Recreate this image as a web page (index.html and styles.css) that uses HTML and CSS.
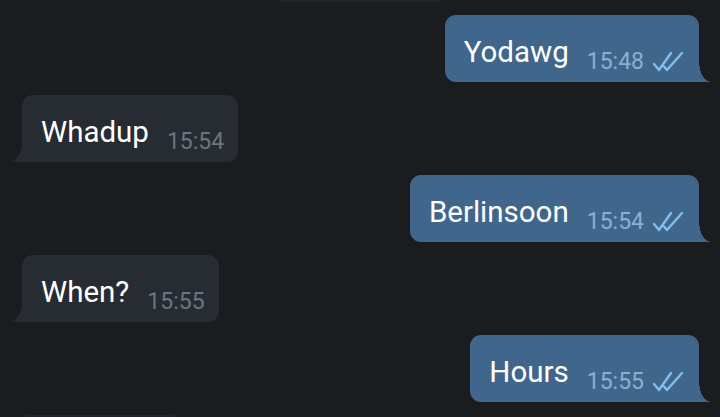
FILE: index.html
```html
<!DOCTYPE html>
<html lang="en">
<head>
    <meta charset="UTF-8">
    <meta name="viewport" content="width=device-width, initial-scale=1.0">
    <title>Chat</title>
    <link rel="stylesheet" href="styles.css">
</head>
<body>
    <div class="chat">
        <div class="prev-edge"></div>
        <div class="msg out">
            <span class="text">Yodawg</span>
            <span class="time">15:48</span>
            <svg class="ticks" viewBox="0 0 34 22" width="34" height="22"><path d="M3 13 L8 19 L20 2 M13 15.5 L16 19 L31 2"/></svg>
        </div>
        <div class="msg in">
            <span class="text">Whadup</span>
            <span class="time">15:54</span>
        </div>
        <div class="msg out">
            <span class="text">Berlinsoon</span>
            <span class="time">15:54</span>
            <svg class="ticks" viewBox="0 0 34 22" width="34" height="22"><path d="M3 13 L8 19 L20 2 M13 15.5 L16 19 L31 2"/></svg>
        </div>
        <div class="msg in">
            <span class="text">When?</span>
            <span class="time">15:55</span>
        </div>
        <div class="msg out">
            <span class="text">Hours</span>
            <span class="time">15:55</span>
            <svg class="ticks" viewBox="0 0 34 22" width="34" height="22"><path d="M3 13 L8 19 L20 2 M13 15.5 L16 19 L31 2"/></svg>
        </div>
        <div class="next-edge"></div>
    </div>
</body>
</html>
```
FILE: styles.css
```css
* { margin: 0; padding: 0; box-sizing: border-box; }
html, body { height: 100%; overflow: hidden; }
body { font-family: Roboto, "Liberation Sans", sans-serif; background-color: #1b1c1f; color: #fff; }
.chat { display: flex; flex-direction: column; gap: 13px; }
.prev-edge { width: 162px; height: 2px; margin-left: 278px; background: #232529; border-radius: 0 0 4px 4px; }
.next-edge { width: 152px; height: 2px; margin-left: 24px; background: #22262b; border-radius: 4px 4px 0 0; }
.msg { position: relative; display: flex; align-items: flex-start; height: 67px; padding: 0 16px 0 19px; border-radius: 11px; }
.msg.out { align-self: flex-end; margin-right: 21px; padding-right: 14px; background-color: #40678b; border-bottom-right-radius: 0; }
.msg.in { align-self: flex-start; margin-left: 22px; background-color: #272c33; border-bottom-left-radius: 0; padding-right: 14px; }
.msg.out::after { content: ""; position: absolute; right: -12px; bottom: 0; width: 12px; height: 20px; background: radial-gradient(ellipse 12px 20px at 100% 0, transparent 97%, #40678b 100%); }
.msg.in::after { content: ""; position: absolute; left: -12px; bottom: 0; width: 12px; height: 20px; background: radial-gradient(ellipse 12px 20px at 0 0, transparent 97%, #272c33 100%); }
.text { font-size: 29.5px; line-height: 32px; margin-top: 21px; }
.time { font-size: 23px; line-height: 26px; margin-top: 34px; margin-left: 18px; }
.out .time { color: #8ab0d3; }
.in .time { color: #6c7580; }
.ticks { margin-top: 36px; margin-left: 7px; fill: none; stroke: #80bef0; stroke-width: 2.4; stroke-linecap: round; stroke-linejoin: round; }
```
